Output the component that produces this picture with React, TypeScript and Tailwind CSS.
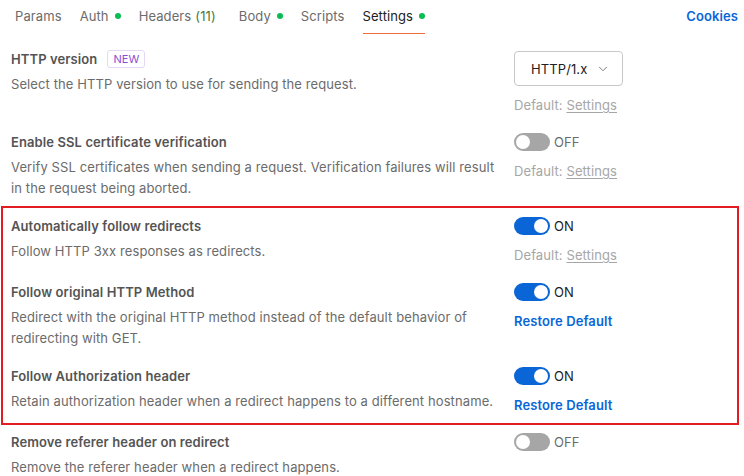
import { ChevronDown } from "lucide-react";

type Right =
  | { kind: "select"; value: string; hint: "default" }
  | { kind: "toggle"; on: boolean; hint?: "default" | "restore" };

type Row = {
  title: string;
  badge?: string;
  desc: string;
  right: Right;
};

const rows: Row[] = [
  {
    title: "HTTP version",
    badge: "NEW",
    desc: "Select the HTTP version to use for sending the request.",
    right: { kind: "select", value: "HTTP/1.x", hint: "default" },
  },
  {
    title: "Enable SSL certificate verification",
    desc: "Verify SSL certificates when sending a request. Verification failures will result in the request being aborted.",
    right: { kind: "toggle", on: false, hint: "default" },
  },
];

const boxed: Row[] = [
  {
    title: "Automatically follow redirects",
    desc: "Follow HTTP 3xx responses as redirects.",
    right: { kind: "toggle", on: true, hint: "default" },
  },
  {
    title: "Follow original HTTP Method",
    desc: "Redirect with the original HTTP method instead of the default behavior of redirecting with GET.",
    right: { kind: "toggle", on: true, hint: "restore" },
  },
  {
    title: "Follow Authorization header",
    desc: "Retain authorization header when a redirect happens to a different hostname.",
    right: { kind: "toggle", on: true, hint: "restore" },
  },
];

const after: Row[] = [
  {
    title: "Remove referer header on redirect",
    desc: "Remove the referer header when a redirect happens.",
    right: { kind: "toggle", on: false },
  },
];

function Dot() {
  return <span className="ml-[6px] inline-block h-[6px] w-[6px] rounded-full bg-[#0cbb52]" />;
}

function Tabs() {
  const tabs = [
    { label: "Params" },
    { label: "Auth", dot: true },
    { label: "Headers", count: "(11)" },
    { label: "Body", dot: true },
    { label: "Scripts" },
    { label: "Settings", dot: true, active: true },
  ];
  return (
    <div className="flex items-start justify-between pl-[15px] pr-[6px]">
      <div className="flex gap-[18px]">
        {tabs.map((t) => (
          <div
            key={t.label}
            className={`flex h-[34px] items-center border-b-[1.5px] pb-[2px] ${
              t.active ? "border-[#f26b3a] text-[#212121]" : "border-transparent text-[#6b6b6b]"
            }`}
          >
            <span>{t.label}</span>
            {t.count && <span className="ml-[4px] mr-[5px] text-[#4b7a3c]">{t.count}</span>}
            {t.dot && <Dot />}
          </div>
        ))}
      </div>
      <div className="flex h-[34px] items-center pb-[2px] font-semibold text-[#0a66d6]">Cookies</div>
    </div>
  );
}

function Toggle({ on }: { on: boolean }) {
  return (
    <div className="flex h-[20px] items-center">
      <div
        className={`flex h-[18px] w-[36px] items-center rounded-full px-[2px] ${
          on ? "justify-end bg-[#0a66d6]" : "justify-start bg-[#a6a6a6]"
        }`}
      >
        <div className="h-[14px] w-[14px] rounded-full bg-white" />
      </div>
      <span className={`ml-[4px] ${on ? "text-[#212121]" : "text-[#6b6b6b]"}`}>{on ? "ON" : "OFF"}</span>
    </div>
  );
}

function Hint({ kind }: { kind?: "default" | "restore" }) {
  if (kind === "default")
    return (
      <div className="mt-[9px] leading-[20px] text-[#a6a6a6]">
        Default: <span className="underline underline-offset-2">Settings</span>
      </div>
    );
  if (kind === "restore")
    return <div className="mt-[9px] font-semibold leading-[20px] text-[#0a66d6]">Restore Default</div>;
  return null;
}

function SettingRow({ row }: { row: Row }) {
  const r = row.right;
  return (
    <div className="flex">
      <div className="w-[490px]">
        <div className="flex h-[20px] items-center font-semibold text-[#545454]">
          {row.title}
          {row.badge && (
            <span className="ml-[10px] rounded-[3px] border border-[#e4d8f6] px-[5px] text-[11px] font-normal leading-[16px] text-[#8a4fd0]">
              {row.badge}
            </span>
          )}
        </div>
        <p className="mt-[5px] leading-[21px] text-[#6b6b6b]">{row.desc}</p>
      </div>
      <div className="ml-[13px]">
        {r.kind === "select" ? (
          <>
            <div className="mt-[2px] flex h-[35px] w-[109px] items-center justify-between rounded-[4px] border border-[#c8c8c8] pl-[16px] pr-[12px] text-[#212121]">
              <span>{r.value}</span>
              <ChevronDown size={14} strokeWidth={1.5} className="text-[#6b6b6b]" />
            </div>
            <div className="mt-[3px]">
              <Hint kind={r.hint} />
            </div>
          </>
        ) : (
          <>
            <Toggle on={r.on} />
            <Hint kind={r.hint} />
          </>
        )}
      </div>
    </div>
  );
}

export default function App() {
  return (
    <div
      className="h-[476px] w-[744px] overflow-hidden bg-white text-[13px] leading-[20px] tracking-[0.1px]"
      style={{ fontFamily: "Inter, 'Noto Sans', sans-serif" }}
    >
      <Tabs />
      <div className="flex flex-col gap-[17px] pl-[11px] pr-[6px] pt-[15px]">
        {rows.map((r) => (
          <SettingRow key={r.title} row={r} />
        ))}
        <div className="-ml-[10px] -mr-[1px] -my-[10px] flex flex-col gap-[17px] border-2 border-[#e31c23] py-[8px] pl-[8px]">
          {boxed.map((r) => (
            <SettingRow key={r.title} row={r} />
          ))}
        </div>
        {after.map((r) => (
          <SettingRow key={r.title} row={r} />
        ))}
      </div>
    </div>
  );
}
